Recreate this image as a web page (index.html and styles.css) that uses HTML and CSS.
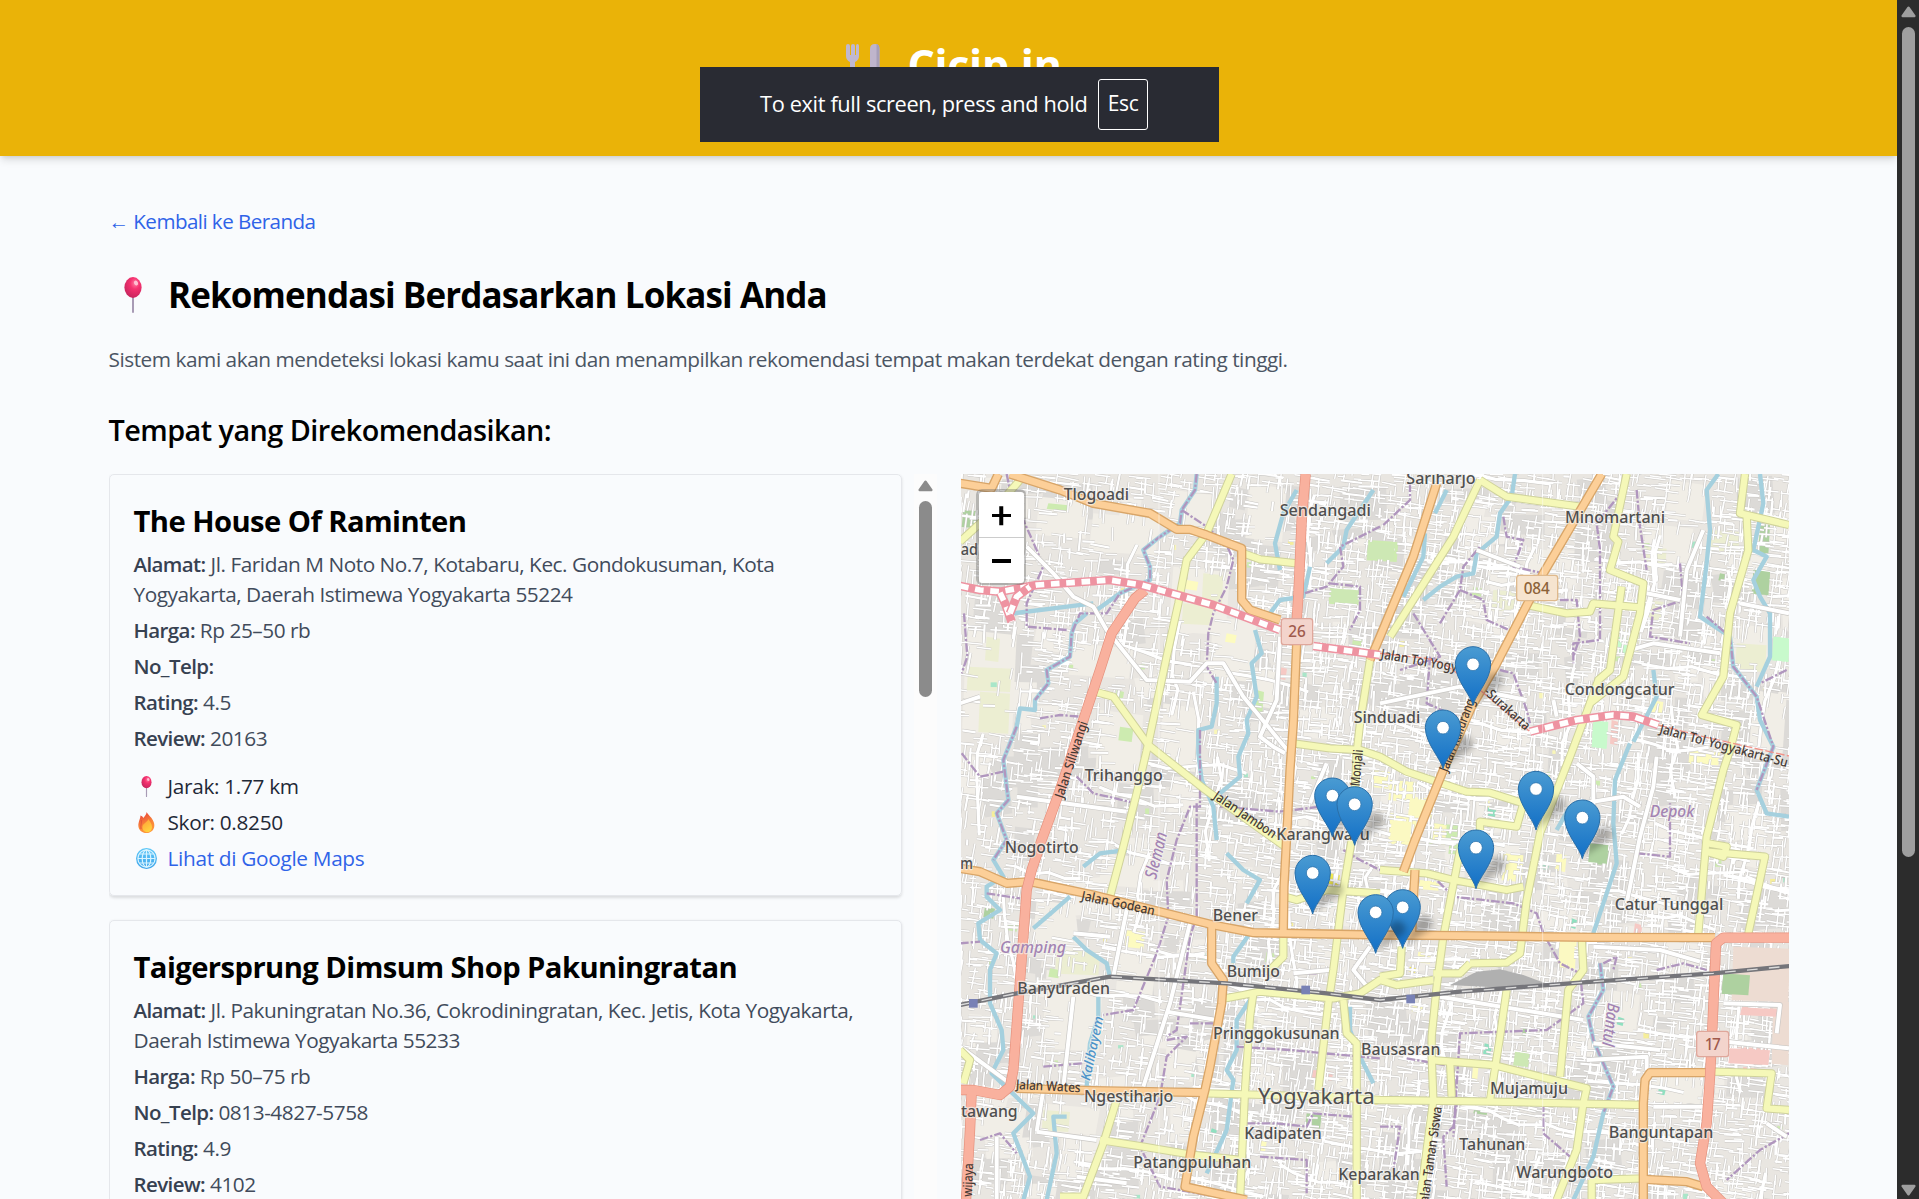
FILE: index.html
```html
<!DOCTYPE html>
<html lang="id">
<head>
<meta charset="utf-8">
<title>Cicip.in</title>
<link rel="stylesheet" href="styles.css">
</head>
<body>
<svg class="defs" width="0" height="0">
  <defs>
    <radialGradient id="ball" cx=".62" cy=".3" r=".7"><stop offset="0" stop-color="#ff7aa0"/><stop offset=".4" stop-color="#f5316f"/><stop offset="1" stop-color="#c9265f"/></radialGradient>
    <linearGradient id="flame" x1=".3" y1="0" x2=".7" y2="1"><stop offset="0" stop-color="#e8433c"/><stop offset=".55" stop-color="#f98437"/><stop offset="1" stop-color="#ff9a3c"/></linearGradient>
    <linearGradient id="core" x1="0" y1="0" x2=".5" y2="1"><stop offset="0" stop-color="#ff9c38"/><stop offset="1" stop-color="#ffd23e"/></linearGradient>
    <linearGradient id="globe" x1="0" y1="0" x2="0" y2="1"><stop offset="0" stop-color="#5ec8f8"/><stop offset="1" stop-color="#3fa4ea"/></linearGradient>
    <linearGradient id="drop" x1="0" y1="0" x2="0" y2="1"><stop offset="0" stop-color="#4a9bd2"/><stop offset="1" stop-color="#126fc6"/></linearGradient>
    <filter id="soft" x="-50%" y="-50%" width="200%" height="200%"><feGaussianBlur stdDeviation="9"/></filter>
    <symbol id="pin" viewBox="0 0 18 36"><rect x="8" y="18" width="2" height="18" rx="1" fill="#a89bb5"/><ellipse cx="9" cy="10.5" rx="8.6" ry="10.4" fill="url(#ball)"/><ellipse cx="12" cy="6" rx="2" ry="2.6" fill="#ffc0d2" transform="rotate(-25 12 6)"/></symbol>
    <symbol id="fire" viewBox="0 0 17 21"><path d="M8.6 0C9 2 15 6 16 11c1.500 6-2.500 10-7.500 10S-.5 17 .5 11.500C1 8 2.500 6 2.500 3.500 4 4 5 5 5.300 6 7 4 8.600 2 8.600 0Z" fill="url(#flame)"/><path d="M10.500 7c.4 2 3.500 4 3.500 8 0 3.500-2.500 5.200-5 5.200S4 18 4.500 14.500C5 11.500 9 10.500 10.500 7Z" fill="url(#core)"/><path d="M3.200 8C4 11 2.300 13 3 17" fill="none" stroke="#d94b3a" stroke-width=".8"/></symbol>
    <symbol id="world" viewBox="0 0 21 21"><circle cx="10.500" cy="10.500" r="10.500" fill="url(#globe)"/><g fill="none" stroke="#d9f4ff" stroke-width="1.200"><circle cx="10.500" cy="10.500" r="8.600"/><ellipse cx="10.500" cy="10.500" rx="4.300" ry="8.600"/><path d="M10.500 2v17M2 10.500h17M3.400 6h14.200M3.400 15h14.200"/></g></symbol>
    <g id="marker"><path d="M-2-4 48-92C70-110 104-84 84-58Z" fill="#000" opacity=".27" filter="url(#soft)"/><path d="M0 0C-6-30-53-76-53-123A53 53 0 0 1 53-123C53-76 6-30 0 0Z" fill="url(#drop)" stroke="#2a6fa8" stroke-width="3"/><circle cx="0" cy="-123" r="19" fill="#fff" stroke="#2f76ae" stroke-width="2.500"/></g>
  </defs>
</svg>

<div class="page">
  <header class="header">
    <div class="brand">
      <svg class="cutlery" viewBox="0 0 34 44"><path d="M0 2q0-2 2-2t2 2v9h1V2q0-2 2-2t2 2v9h1V2q0-2 1.500-2T13 2v10q0 4-4 6v26H4V18q-4-2-4-6Z" fill="#c0b8d0"/><path d="M24 5q0-5 5-5 4.500 0 4.500 5v39h-6V24H24Z" fill="#bfb5cc"/><path d="M30.500 0q3 .5 3 5v39h-3Z" fill="#a79fb8"/></svg>
      <h1 class="logo">Cicip.in</h1>
    </div>
  </header>

  <main class="main">
    <a class="back">← Kembali ke Beranda</a>
    <h2 class="heading"><svg class="heading-pin"><use href="#pin"/></svg>Rekomendasi Berdasarkan Lokasi Anda</h2>
    <p class="lead">Sistem kami akan mendeteksi lokasi kamu saat ini dan menampilkan rekomendasi tempat makan terdekat dengan rating tinggi.</p>
    <h3 class="subheading">Tempat yang Direkomendasikan:</h3>

    <div class="columns">
      <section class="list">
        <div class="cards">
          <article class="card">
            <h4>The House Of Raminten</h4>
            <p><b>Alamat:</b> Jl. Faridan M Noto No.7, Kotabaru, Kec. Gondokusuman, Kota<br>Yogyakarta, Daerah Istimewa Yogyakarta 55224</p>
            <p><b>Harga:</b> Rp 25–50 rb</p>
            <p><b>No_Telp:</b></p>
            <p><b>Rating:</b> 4.5</p>
            <p><b>Review:</b> 20163</p>
            <div class="facts">
              <p><span class="ico"><svg class="i-pin"><use href="#pin"/></svg></span>Jarak: 1.77 km</p>
              <p><span class="ico"><svg class="i-fire"><use href="#fire"/></svg></span>Skor: 0.8250</p>
              <p class="link"><span class="ico"><svg class="i-world"><use href="#world"/></svg></span>Lihat di Google Maps</p>
            </div>
          </article>
          <article class="card">
            <h4>Taigersprung Dimsum Shop Pakuningratan</h4>
            <p><b>Alamat:</b> Jl. Pakuningratan No.36, Cokrodiningratan, Kec. Jetis, Kota Yogyakarta,<br>Daerah Istimewa Yogyakarta 55233</p>
            <p><b>Harga:</b> Rp 50–75 rb</p>
            <p><b>No_Telp:</b> 0813-4827-5758</p>
            <p><b>Rating:</b> 4.9</p>
            <p><b>Review:</b> 4102</p>
            <div class="facts"></div>
          </article>
        </div>
        <div class="track">
          <svg class="arrow" viewBox="0 0 15 12"><path d="M7.500 1.800 13.300 10H1.700Z"/></svg>
          <div class="thumb"></div>
        </div>
      </section>

      <section class="map">
        <svg class="canvas" viewBox="3 12 2484 2175" preserveAspectRatio="none">
          <rect x="0" y="0" width="2490" height="2190" fill="#e9e6e1"/>
          <g id="land"></g>
          <g id="streets"></g>
          <g id="roads"></g>
          <path d="M597 0V2190M1748 0V2190" stroke="#fff" stroke-width="2" opacity=".7"/>
          <g class="shields">
            <rect x="964" y="446" width="94" height="78" rx="8" fill="#f3d4cc" stroke="#dfa79b"/><text x="1011" y="502" fill="#a05a4c" textLength="52">26</text>
            <rect x="1670" y="316" width="123" height="76" rx="8" fill="#f6e4cf" stroke="#dfb98c"/><text x="1730" y="373" fill="#8c6238" textLength="78">084</text>
            <rect x="2210" y="1684" width="96" height="76" rx="8" fill="#f3d4cc" stroke="#dfa79b"/><text x="2258" y="1739" fill="#a05a4c" textLength="48">17</text>
          </g>
          <g id="labels"></g>
          <g>
            <use href="#marker" x="1539" y="706"/><use href="#marker" x="1449" y="896"/>
            <use href="#marker" x="1728" y="1080"/><use href="#marker" x="1117" y="1100"/><use href="#marker" x="1184" y="1126"/>
            <use href="#marker" x="1867" y="1166"/><use href="#marker" x="1548" y="1256"/><use href="#marker" x="1058" y="1332"/>
            <use href="#marker" x="1328" y="1435"/><use href="#marker" x="1247" y="1450"/>
          </g>
        </svg>
        <div class="zoom"><span class="plus"></span><span class="minus"></span></div>
      </section>
    </div>
  </main>
</div>

<div class="scrollbar">
  <svg class="arrow" viewBox="0 0 15 12"><path d="M7.500 1.800 13.300 10H1.700Z"/></svg>
  <div class="thumb"></div>
  <svg class="arrow down" viewBox="0 0 15 12"><path d="M7.500 1.800 13.300 10H1.700Z"/></svg>
</div>

<div class="toast"><span>To exit full screen, press and hold</span><kbd>Esc</kbd></div>
<script src="map.js"></script>
</body>
</html>
```
FILE: styles.css
```css
* { box-sizing: border-box; margin: 0; padding: 0; }

body {
  display: grid;
  grid-template-columns: 1fr 22px;
  height: 1199px;
  overflow: hidden;
  background: #f9fbfd;
  color: #000;
  font: 20.8px/30px "Open Sans", "Noto Sans", sans-serif;
  letter-spacing: -.46px;
}

.defs { position: absolute; }
.page { height: 1199px; overflow: hidden; }

.header {
  height: 156px;
  padding-top: 40px;
  background: #eab308;
  box-shadow: 0 5px 8px -1px rgba(0, 0, 0, .12), 0 2px 5px -2px rgba(0, 0, 0, .12);
}
.brand { display: flex; justify-content: center; }
.cutlery { width: 34px; height: 44px; margin: 4px 27px 0 11px; }
.logo { color: #fff; font-size: 43px; line-height: 50px; letter-spacing: -.3px; }

.main { padding: 50px 108px 0 108.5px; }
.back { display: block; color: #2f63e8; font-size: 20.6px; letter-spacing: -.56px; }
.heading {
  display: flex;
  align-items: center;
  height: 44px;
  margin-top: 37px;
  font-size: 35px;
  letter-spacing: -.9px;
}
.heading-pin { width: 22px; height: 36px; margin: 0 24px 0 13.500px; }
.lead { margin-top: 27px; color: #4b5563; letter-spacing: -.465px; white-space: nowrap; }
.subheading { height: 38px; margin-top: 37px; font-size: 28.8px; font-weight: 600; line-height: 38px; letter-spacing: -.54px; }

.columns { display: grid; grid-template-columns: 828px 828px; gap: 24.500px; margin-top: 25px; }
.list { display: flex; justify-content: space-between; height: 725px; overflow: hidden; padding-left: .5px; }
.cards { display: flex; flex-direction: column; gap: 24px; width: 793px; }
.card {
  flex: none;
  height: 422px;
  padding: 26px 23.500px 0;
  border: 1px solid #e5e7eb;
  border-radius: 5px;
  box-shadow: 0 1.500px 3px rgba(0, 0, 0, .12);
  color: #414b5b;
}
.card h4 { margin-bottom: 8px; color: #000; font-size: 29.2px; line-height: 40px; letter-spacing: -.56px; white-space: nowrap; }
.card p { margin-bottom: 6px; white-space: nowrap; }
.card b { color: #374151; font-size: 20.5px; font-weight: 600; letter-spacing: -.6px; }
.facts { padding-top: 12px; color: #1f2937; letter-spacing: -.32px; }
.facts p { display: flex; align-items: center; }
.facts .link { color: #2f63e8; }
.ico { display: flex; justify-content: center; width: 25px; margin-right: 9px; }
.i-pin { width: 13px; height: 21px; }
.i-fire { width: 17px; height: 21px; }
.i-world { width: 21px; height: 21px; }

.track { width: 23px; padding-top: 6px; background: #fcfcfc; }
.arrow { display: block; width: 15px; height: 12px; margin: 0 auto; fill: #8b8b8b; stroke: #8b8b8b; stroke-width: 2.500; stroke-linejoin: round; }
.track .thumb { width: 13px; height: 196px; margin: 9px auto 0; border-radius: 7px; background: #8b8b8b; }

.scrollbar { display: flex; flex-direction: column; align-items: center; padding: 6px 0 3px; background: #2c2c2c; }
.scrollbar .thumb { width: 13px; height: 830px; margin-top: 9px; border-radius: 7px; background: #9f9f9f; }
.scrollbar .arrow { margin: 0; fill: #9f9f9f; stroke: #9f9f9f; }
.scrollbar .down { margin-top: auto; transform: rotate(180deg); }

.map { position: relative; height: 725px; overflow: hidden; letter-spacing: 0; }
.canvas { display: block; width: 828px; height: 725px; }
.canvas text { font-family: "Noto Sans", sans-serif; text-anchor: middle; }
.shields rect { stroke-width: 4; }
.shields text { font-size: 46px; font-weight: 500; }
.label { fill: #4f4f4f; stroke: #f4f2ee; stroke-width: 7; stroke-opacity: .7; stroke-linejoin: round; paint-order: stroke; font-size: 51px; font-weight: 500; }
.label.city { font-size: 64px; font-weight: 400; }
.label.road { fill: #453a35; stroke: none; font-size: 40px; }
.label.area { fill: #a384b3; font-style: italic; }
.label.river { fill: #4d94c9; font-style: italic; font-size: 40px; }

.zoom {
  position: absolute;
  left: 15px;
  top: 15px;
  display: grid;
  grid-template-rows: 45.500px 45.500px;
  width: 50px;
  padding: 2.500px;
  border-radius: 6px;
  background: rgba(90, 90, 90, .35);
}
.zoom span { display: grid; place-items: center; background: #fff; border-radius: 3px 3px 0 0; }
.zoom .plus { padding-top: 2px; }
.zoom .minus { border-top: 1px solid #ccc; border-radius: 0 0 3px 3px; padding-top: 1px; }
.zoom span::before, .zoom .plus::after { content: ""; grid-area: 1 / 1; width: 19px; height: 3.500px; background: #000; }
.zoom .plus::after { transform: rotate(90deg); }

.toast {
  position: absolute;
  left: 700px;
  top: 67px;
  display: flex;
  align-items: center;
  width: 519px;
  height: 75px;
  padding-left: 60px;
  background: #292b33;
  color: #fff;
  font-size: 21.8px;
  letter-spacing: -.37px;
}
.toast span { margin-top: -2px; }
.toast kbd {
  margin-left: 11px;
  width: 49.500px;
  height: 51px;
  border: 1.500px solid #fff;
  border-radius: 3px;
  font: inherit;
  font-size: 21px;
  line-height: 47px;
  text-align: center;
}
```
FILE: map.js
```js
// Basemap: land use, minor streets, main roads and place names.
const NS = 'http://www.w3.org/2000/svg';
const byId = id => document.getElementById(id);
function add(parent, tag, attrs, text) {
  const el = document.createElementNS(NS, tag);
  for (const k in attrs) el.setAttribute(k, attrs[k]);
  if (text) el.textContent = text;
  parent.appendChild(el);
  return el;
}
let seed = 41;
const rnd = () => (seed = (seed * 16807) % 2147483647) / 2147483647;
const between = (a, b) => a + rnd() * (b - a);

const land = byId('land'), streets = byId('streets'), roads = byId('roads'), labels = byId('labels');

// open fields with few streets: x, y, w, h
const fields = [
  [20, 480, 150, 300], [240, 80, 150, 110], [400, 130, 200, 110], [340, 520, 180, 90], [420, 720, 130, 180],
  [610, 700, 110, 190], [640, 290, 170, 190], [760, 440, 130, 180], [640, 60, 120, 110], [870, 40, 110, 160],
  [880, 590, 70, 110], [260, 1500, 170, 230], [430, 1150, 160, 90], [230, 1290, 120, 150], [620, 1730, 90, 90],
  [2130, 30, 110, 110], [2060, 160, 140, 110], [2380, 660, 100, 200], [1950, 1560, 90, 120], [2060, 1820, 170, 80],
  [240, 1900, 180, 80], [480, 1440, 110, 130], [40, 1900, 160, 90], [1700, 230, 90, 70], [2320, 460, 120, 120]
];
for (let i = 0; i < 330; i++) {
  const x = between(0, 2480), y = between(0, 2180), w = between(40, 150), h = between(30, 130), s = between(-14, 14);
  add(land, 'path', { d: `M${x} ${y}l${w} ${s}l${-s} ${h}l${-w} ${-s}Z`, fill: rnd() < .62 ? '#dcdad7' : '#f1eee8' });
}
for (const [x, y, w, h] of fields)
  add(land, 'path', { d: `M${x} ${y}l${w} 16l-14 ${h}l${-w} -12Z`, fill: '#f1eee7' });

const patches = [
  ['#eceed2', [[25, 590, 130, 70], [60, 665, 90, 120], [730, 310, 60, 90], [670, 400, 90, 60], [1600, 360, 80, 60], [2250, 180, 90, 60], [2060, 230, 60, 60], [290, 1440, 130, 70], [1990, 480, 50, 60], [2330, 520, 90, 80], [250, 1920, 80, 60], [80, 500, 40, 70], [2050, 390, 60, 60]]],
  ['#aed1a0', [[10, 120, 70, 50], [1890, 1120, 60, 60], [2380, 300, 50, 70], [2400, 160, 30, 90], [2290, 1510, 80, 60], [1545, 1905, 40, 24], [1040, 1930, 45, 40], [75, 1310, 30, 30], [2280, 310, 30, 20], [1690, 1675, 24, 20]]],
  ['#cdebb0', [[1225, 210, 90, 60], [1110, 350, 90, 50], [1180, 500, 40, 30], [470, 660, 22, 30], [1665, 1740, 45, 45], [890, 660, 22, 60], [480, 770, 40, 40], [920, 1445, 25, 30], [270, 1495, 30, 24], [1410, 1060, 90, 60], [1540, 350, 30, 24], [265, 100, 60, 16], [1470, 1110, 60, 40], [145, 1355, 30, 24]]],
  ['#c8facc', [[1900, 750, 45, 80], [2440, 500, 50, 70], [1975, 500, 28, 50]]],
  ['#8fe0c0', [[1130, 365, 28, 26], [1585, 1010, 24, 30], [2460, 525, 24, 26], [1835, 1345, 16, 26], [1975, 1640, 18, 22], [1574, 1720, 22, 30], [2098, 1850, 20, 20], [755, 1975, 16, 18], [1303, 1510, 24, 16], [2220, 850, 28, 18], [1645, 1200, 20, 24], [1750, 1175, 18, 20], [2370, 1520, 16, 30]]],
  ['#fdfbc0', [[680, 330, 35, 26], [800, 490, 30, 24], [2070, 690, 40, 40], [2190, 840, 90, 40], [1290, 930, 80, 60], [1350, 980, 70, 60], [1420, 1060, 40, 60], [1290, 1030, 80, 90], [500, 1380, 55, 50], [1380, 1230, 60, 26], [1630, 1150, 60, 80], [1790, 1150, 30, 50], [1800, 1400, 50, 90], [1375, 1445, 40, 30], [900, 2010, 20, 30], [1540, 1780, 16, 50], [1240, 900, 50, 50], [1360, 1600, 30, 24]]],
  ['#f1e94f', [[1110, 1210, 30, 30], [1350, 1490, 20, 12]]],
  ['#f6c9c4', [[2345, 1610, 110, 22], [2310, 1730, 120, 44], [1955, 750, 22, 70], [2025, 1360, 22, 34], [955, 590, 26, 34], [1060, 1800, 60, 26], [2350, 1790, 40, 20], [1345, 1150, 22, 40]]]
];
function drawPatches(target, groups) {
  for (const [fill, list] of groups)
    for (const [x, y, w, h] of list)
      add(target, 'path', { d: `M${x} ${y}l${w} 6l-5 ${h}l${-w} -5Z`, fill });
}
drawPatches(land, patches);
for (let i = 0; i < 60; i++)
  add(land, 'rect', { x: between(0, 2480), y: between(0, 2180), width: between(8, 20), height: between(8, 20), fill: ['#f6ee9a', '#cdebb0', '#a9e6c9', '#f9f6b8'][i % 4] });

// dense residential streets
const inField = (x, y) => fields.some(f => x > f[0] && x < f[0] + f[2] && y > f[1] && y < f[1] + f[3]);
const width = [5, 7, 10];
const trace = ['', '', ''];
for (let y = 0; y < 2190; y += 19)
  for (let x = 0; x < 2490; x += 23) {
    if (inField(x, y) && rnd() < .93) continue;
    const thinWest = x < 750 ? .32 : .1;
    if (rnd() < thinWest) continue;
    const px = x + between(-9, 9), py = y + between(-8, 8), tilt = .1 + between(-.08, .1);
    const a = rnd() < .54 ? tilt : Math.PI / 2 + tilt;
    const l = between(18, 68), k = rnd() < .8 ? 0 : 1;
    trace[k] += `M${px.toFixed(0)} ${py.toFixed(0)}l${(Math.cos(a) * l).toFixed(0)} ${(Math.sin(a) * l).toFixed(0)}`;
  }
for (let i = 0; i < 75; i++) {
  let x = between(0, 2480), y = between(0, 2180);
  let d = `M${x} ${y}`;
  const steep = rnd() < .5;
  for (let j = 0; j < 4; j++) d += steep ? `l${between(-30, 18)} ${between(40, 90)}` : `l${between(40, 90)} ${between(-8, 28)}`;
  trace[2] += d;
}
trace.forEach((d, k) => add(streets, 'path', { d, fill: 'none', stroke: '#c8c6c3', 'stroke-width': width[k] + 2.5 }));
trace.forEach((d, k) => add(streets, 'path', { d, fill: 'none', stroke: '#fff', 'stroke-width': width[k] - .5 }));

// airfield and the larger parks stay clear of streets
drawPatches(streets, [
  ['#eddcd2', [[2320, 1430, 170, 160], [2440, 1590, 50, 190]]],
  ['#f6c9c4', [[2345, 1612, 110, 22], [2310, 1735, 120, 44]]],
  ['#aed1a0', [[2290, 1510, 80, 60], [2385, 300, 45, 70], [1890, 1120, 55, 55]]],
  ['#c8facc', [[1900, 750, 42, 80], [2445, 500, 45, 70]]],
  ['#cde8b4', [[1225, 215, 80, 50], [1115, 355, 80, 40], [1665, 1745, 42, 40]]],
  ['#fbf9c2', [[1350, 985, 50, 50], [1295, 1050, 60, 60], [1800, 1410, 45, 70]]]
]);

const kinds = {
  water: [13, '#a5d0de', 0, ''],
  admin: [7, '#b096be', 0, '', '26 6 7 6'],
  white: [12, '#fff', 3, '#c9c7c4'],
  yellow: [19, '#f5f8b8', 4, '#cfd29b'],
  orange: [20, '#fccf98', 5, '#d8a568'],
  red: [27, '#f9b19e', 3, '#e5917d']
};
const network = [
  ['water', '710,12 705,60 665,120 660,160 600,200 550,240 570,290 570,330 480,370 410,420', '380,430 345,460 335,490 330,560 260,600 265,640 225,690 225,720 180,715 170,770 130,870 145,990 110,1030 140,1110 100,1170 130,1220 80,1250 80,1280 120,1320 55,1360 60,1410 110,1450 90,1500 90,1600 125,1680 130,1740 95,1810 220,1930 160,1990 210,2120 190,2190',
    '770,620 770,700 755,770 715,780 715,850 725,930 760,1010 770,1110', '885,480 905,550 875,580 890,680 860,750 865,790 835,860 840,920 780,970', '1010,60 970,130 945,220 960,300', '1240,60 1160,180 1150,230 1100,280', '1050,290 1030,380 960,390 930,430',
    '1665,12 1655,80 1620,130 1610,200 1550,250 1540,310 1490,320 1440,350 1390,390', '1460,60 1425,130', '1395,190 1390,260 1330,380', '2275,12 2240,60 2250,180 2240,280 2220,440 2310,500 2320,590 2390,680 2400,750 2440,830 2390,960 2420,1030 2487,1040',
    '2400,12 2410,100 2380,240 2420,260 2380,330 2400,380 2430,430 2430,560 2390,650', '2010,820 1965,930 1960,1060 1970,1180 1900,1390', '2080,600 2090,680 2020,815', '1920,1480 1930,1560 1885,1640 1900,1710 1960,1850 1930,1930 1900,2060 1840,2190',
    '340,1400 380,1440 440,1480 450,1520', '415,1580 415,1640 390,1720 380,1850', '320,1940 280,1940 290,2050 260,2190', '870,1390 820,1460 820,1480', '870,1590 830,1650 830,1740 800,1800 820,1830 800,1980 740,2110', '370,1190 420,1150 500,1140', '220,1375 330,1280', '160,430 400,400', '1170,1610 1170,1680 1200,1760 1240,1840', '1830,1010 1790,1080', '800,1150 850,1200 900,1230 860,1300'],
  ['admin', '665,120 740,170 800,225 820,270 800,350 760,430 745,490 740,590 770,640', '710,12 705,60 665,120 660,160 600,200 550,240 570,290 570,330 480,370 440,430 360,430 335,490 330,560 260,600 265,640 225,690', '170,770 130,870 145,990 110,1030 140,1110 100,1170', '140,12 150,60 230,240 250,290 200,400 200,470 320,480', '12,430 22,560 5,610', '5,850 60,920 130,905', '240,745 300,735 360,740',
    '350,920 400,970 530,1000 490,1110', '720,780 720,930 720,1010 690,1010 650,1110 620,1230 625,1340 590,1450 520,1620 430,1635', '710,1000 710,1340 690,1400 650,1680 620,1700', '780,1010 960,1025 1120,1005', '1110,340 1200,350 1200,420 1170,480', '1260,170 1200,200 1140,230 1150,290 1100,350 1000,380', '1350,40 1350,90 1270,165', '1360,430 1440,560 1320,600', '1630,140 1640,200 1690,210 1660,290 1750,310',
    '1500,360 1570,390 1580,450 1670,490', '1440,460 1500,360 1510,290 1560,230', '1620,600 1660,610 1700,720 1710,760', '1990,60 1910,160 1920,240 1920,510 1840,520 1840,580', '2030,60 2040,170 2060,300', '2160,280 2170,390 2080,420 2070,500 2190,520', '2240,440 2310,500 2320,590 2390,680 2440,830 2390,960', '2480,600 2400,640', '1410,560 1400,700 1490,740', '1800,390 1850,390 1860,500 1840,560', '1260,1200 1420,1220 1480,1280 1660,1300 1730,1330 1750,1390 1800,1480 1860,1510 1870,1600 1760,1680 1500,1690 1480,2000',
    '2030,1150 2130,1160 2130,1000', '1920,1480 1930,1560 1885,1640 1900,1710 1960,1850 1930,1930', '1930,1480 1970,1460 1960,1500', '2090,1500 2170,1480 2240,1500', '0,1420 60,1415', '80,1270 180,1285', '620,1710 680,1700 620,1760 600,1880 540,2030 600,2150 830,2190', '250,1790 370,1780', '60,2010 120,1990 170,2050', '690,1660 780,1660', '830,1730 990,1740 1200,1760 1260,1765', '1340,1765 1480,1790 1490,1900 1480,1970 1450,2000 1460,2150', '1260,1970 1320,1970 1300,2100', '1150,1140 1200,1170 1260,1200', '860,1960 950,1960 1040,1970 1060,1930 1180,1940', '900,2060 1040,2070 1040,2170', '1750,1900 1750,1990 1830,2060', '2487,1990 2400,2040 2300,2130', '1070,1510 1000,1510'],
  ['white', '200,230 280,310 340,380 400,410 440,480 560,630 690,635 740,580 790,580 850,680 990,850', '960,500 950,690 900,800 940,830 975,850', '170,980 500,1025', '0,700 60,680', '2230,180 2180,300 2160,500', '2060,370 2160,390', '2010,540 2080,520 2280,550', '2090,860 2080,950 2040,1100 2000,1300', '1260,700 1500,650 1700,690', '1780,690 1790,740', '1550,240 1680,290', '2340,400 2487,430', '1870,1000 1990,980 2040,1010', '2480,2000 2420,1960', '1440,1580 1870,1650', '230,1985 410,2010', '230,1985 250,1860', '340,1580 310,1850', '0,1730 150,1840', '500,1320 460,1520', '690,1360 630,1600 550,1850', '620,1625 770,1650', '1000,1510 1110,1500', '340,1390 450,1400', '1900,1430 2100,1440 2220,1475', '1880,1770 2060,1760 2060,1800', '2080,1910 2230,1910', '1100,880 1050,1000', '1850,880 1900,920 1900,1010', '350,2120 500,2140', '110,2000 110,2190', '1900,1720 2100,1740', '2290,1600 2460,1605 2450,1690', '2300,1715 2487,1735', '1230,1560 1180,1500 1230,1430'],
  ['yellow', '815,12 740,190 680,270 655,400 620,560 565,820 530,970 490,1130 450,1280', '405,665 460,680 565,825 730,955 940,1105 975,1130', '850,250 900,268 1010,280', '0,215 60,160 110,110 180,30', '1000,820 1110,835 1200,840 1260,860 1340,905 1520,965 1590,968 1690,1000 1670,1070 1560,1055 1560,1080', '1230,570 1200,760 1190,850 1180,1080 1150,1260 1120,1500 1105,1600 1075,1860',
    '975,1280 1010,1290 1100,1260 1260,1270', '1560,30 1480,200 1290,500', '1560,30 1640,80 1860,110', '2000,12 1960,200 1975,215 1950,300 2050,340 2040,430 1990,620 1890,700 1830,860 1740,1090 1700,1290 1680,1450 1640,1478 1530,1480', '1985,350 1950,600 1915,630 1890,700', '1700,405 1820,430 1890,425 1900,400 2040,412', '2355,12 2340,130 2487,165', '2360,140 2365,240 2310,430 2290,620 2225,735 2330,765 2310,840 2290,900 2240,1100 2215,1390', '2245,1120 2300,1130 2290,1160 2240,1145 2415,1160 2365,1390',
    '1260,1200 1400,1210 1480,1230 1640,1260 1690,1250', '1500,1140 1450,1400 1430,1550 1415,1700 1415,1760 1420,1890 1380,2190', '1640,1560 1620,1700 1590,1890', '1865,1400 1870,1500 1825,1560 1800,1820', '1410,1770 1600,1785 1880,1855 1870,1900 1850,2040 1790,2190', '740,1870 1100,1880 1260,1890 1600,1895 2050,1905', '970,1400 970,1460 920,1510', '795,1585 850,1575 900,1565 1120,1585 1200,1570 1260,1530 1310,1545 1420,1530', '880,1570 870,1640 855,1860 840,2190', '1150,1590 1160,1690 1190,1720 1190,2190', '2260,1805 2435,1810 2420,1915 2487,1920', '1325,1430 1320,1510 1260,1520', '0,1740 30,1770 10,1840', '470,1890 430,2020 370,2180 300,2180', '420,2010 550,2030 700,2055 840,2070', '1890,2130 2050,2125', '1895,2130 1895,2190', '1420,1510 1500,1510 1530,1480', '1470,1770 1475,1880'],
  ['orange', '0,40 95,55 115,12', '150,12 300,60 400,100 570,130 650,178 690,178 740,195 845,235 845,300 845,390 870,420 960,450', '1010,520 1000,760 990,900 980,1100 972,1250 970,1385', '0,1195 60,1205 140,1240 210,1235 400,1275 600,1325 760,1365 880,1388 1260,1395 1500,1397 1900,1402 2265,1403', '755,1370 755,1480 790,1530 785,1600 750,1790 735,1860 700,2000 675,2150 860,2190', '170,1855 400,1862 735,1868', '1925,12 1750,310 1605,590 1535,710 1450,900 1365,1110 1330,1205', '1430,40 1360,260 1260,500 1230,570', '1365,1200 1355,1390', '2245,1808 2070,1808 2055,1830 2050,1900 2050,2190', '2055,2128 2180,2135 2230,2150'],
  ['red', '555,360 525,385 455,490 420,600 360,780 300,960 245,1110 215,1200 200,1260 190,1400 175,1600 160,1800 150,1850 120,1875 40,1860 0,1860', '35,1865 30,1980 18,2190', '1037,12 1025,150 1015,380 1010,450', '2490,1403 2290,1403 2268,1420 2262,1560 2255,1720 2250,1820 2240,1960 2220,2080 2240,2150 2290,2200']
];
const line = (pts, attrs) => add(roads, 'polyline', Object.assign({ points: pts, fill: 'none', 'stroke-linejoin': 'round' }, attrs));
for (const [kind, ...paths] of network) {
  const [w, color, edge, edgeColor, dash] = kinds[kind];
  if (edge) for (const p of paths) line(p, { stroke: edgeColor, 'stroke-width': w + edge * 2 - 2 });
  for (const p of paths) line(p, { stroke: color, 'stroke-width': w, 'stroke-dasharray': dash || 'none' });
}

// rail yard, railway and stations
add(roads, 'path', { d: 'M1470 1545 1550 1505 1620 1498 1690 1515 1770 1545 1600 1552Z', fill: '#b0b0b0' });
const rail = '0,1605 170,1570 450,1520 800,1540 1100,1570 1260,1590 1500,1565 1900,1535 2260,1510 2490,1488';
line(rail, { stroke: '#75757a', 'stroke-width': 13 });
line(rail, { stroke: '#dcdcdc', 'stroke-width': 4, 'stroke-dasharray': '32 34' });
for (const [x, y] of [[40, 1600], [1037, 1560], [1352, 1587]]) add(roads, 'rect', { x: x - 13, y: y - 13, width: 26, height: 26, fill: '#7881b5' });

// toll road under construction
for (const p of ['0,348 60,360 120,365 230,345 450,330 545,345 760,405 960,480', '120,368 135,400 155,455', '150,430 170,380 210,350', '1060,528 1260,555', '1710,785 1850,750 1960,735 2020,740 2095,765']) {
  line(p, { stroke: '#ee93a1', 'stroke-width': 26 });
  line(p, { stroke: '#fff', 'stroke-width': 17, 'stroke-dasharray': '26 20' });
}
for (const p of ['1260,550 1400,565 1450,580 1560,660 1710,785', '2095,765 2230,800 2487,858'])
  line(p, { stroke: '#f1948a', 'stroke-width': 4, 'stroke-dasharray': '26 7' });

// place names: text, centre x, baseline, width, class, rotation
const names = [
  ['Tlogoadi', 409, 91, 196, ''], ['Sendangadi', 1096, 137, 274, ''], ['Sariharjo', 1443, 43, 208, ''], ['Minomartani', 1965, 159, 300, ''],
  ['ad', 28, 255, 52, ''], ['Condongcatur', 1979, 676, 330, ''], ['Sinduadi', 1281, 759, 200, ''], ['Trihanggo', 491, 934, 234, ''],
  ['Nogotirto', 245, 1150, 222, ''], ['m', 20, 1196, 38, ''], ['Karangwaru', 1089, 1110, 280, ''], ['Bener', 826, 1354, 136, ''],
  ['Bumijo', 880, 1522, 160, ''], ['Banyuraden', 311, 1573, 278, ''], ['Pringgokusunan', 949, 1708, 380, ''], ['Bausasran', 1322, 1754, 238, ''],
  ['Catur Tunggal', 2127, 1319, 326, ''], ['Mujamuju', 1707, 1872, 234, ''], ['Ngestiharjo', 506, 1896, 268, ''], ['tawang', 88, 1941, 170, ''],
  ['Yogyakarta', 1069, 1901, 350, 'city'], ['Kadipaten', 969, 2008, 232, ''], ['Banguntapan', 2103, 2005, 314, ''], ['Tahunan', 1597, 2041, 198, ''],
  ['Patangpuluhan', 697, 2093, 354, ''], ['Keparakan', 1257, 2131, 244, ''], ['Warungboto', 1814, 2124, 290, ''],
  ['Depok', 2136, 1042, 134, 'area'], ['Gamping', 219, 1448, 198, 'area'], ['Sleman', 605, 1160, 142, 'area', -76],
  ['Bantul', 1935, 1662, 130, 'area', 98], ['Kalibayem', 410, 1738, 196, 'river', -78],
  ['Jalan Siliwangi', 347, 873, 240, 'road', -72], ['Jalan Jambon', 848, 1045, 218, 'road', 34], ['Jalan Godean', 472, 1313, 224, 'road', 12],
  ['Jalan Wates', 264, 1862, 194, 'road', 3], ['wijaya', 38, 2130, 100, 'road', -88], ['Jalan Taman Siswa', 1425, 2060, 300, 'road', -82],
  ['Jalan Tol Yogy', 1375, 585, 232, 'road', 10], ['-Surakarta', 1633, 726, 170, 'road', 42], ['Jalan Tol Yogyakarta-Su', 2288, 840, 396, 'road', 15],
  ['Jalan Kaliurang', 1504, 800, 230, 'road', -69], ['Monjali', 1204, 895, 110, 'road', -85]
];
for (const [t, x, y, w, cls, rot] of names)
  add(labels, 'text', { x, y, textLength: w, lengthAdjust: 'spacingAndGlyphs', class: 'label ' + cls, transform: rot ? `rotate(${rot} ${x} ${y})` : '' }, t);
```
